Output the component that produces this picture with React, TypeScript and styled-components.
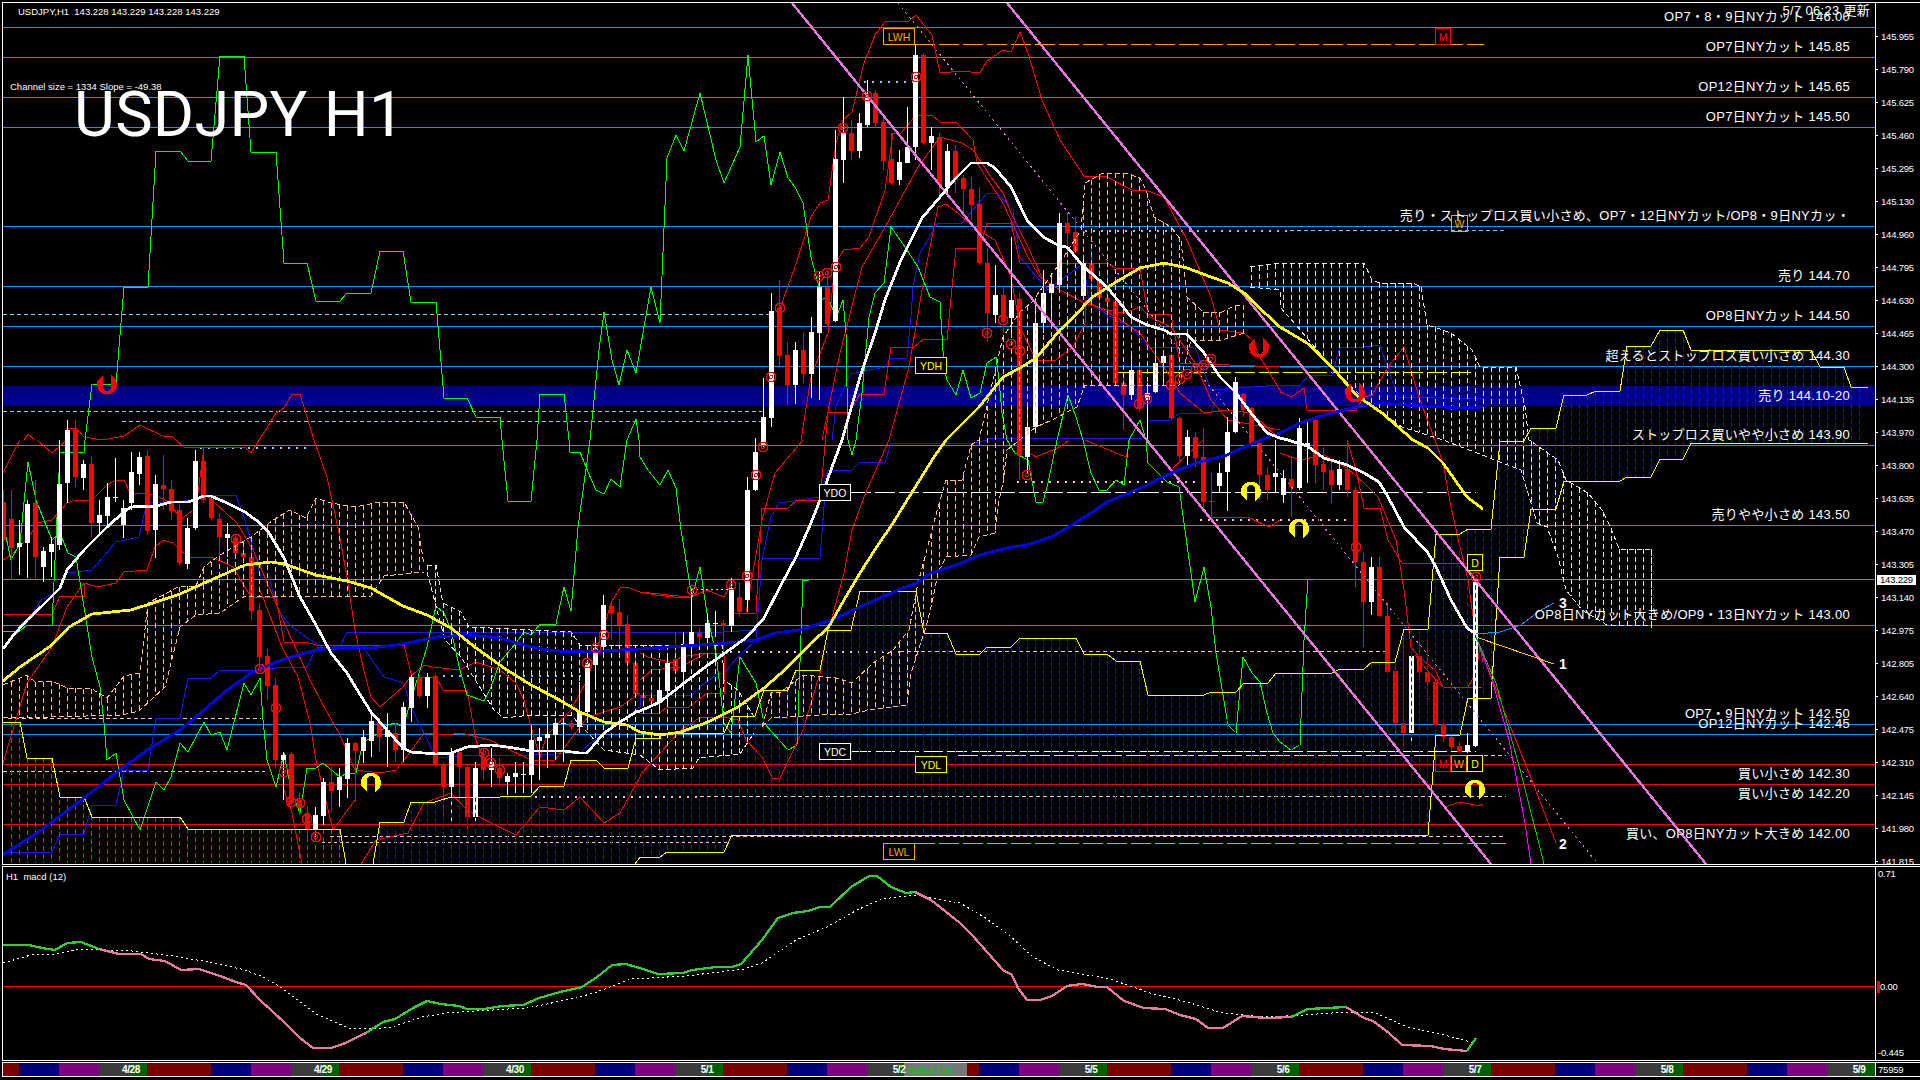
import React from 'react';
import styled, {createGlobalStyle} from 'styled-components';

const GlobalStyle = createGlobalStyle`
    html, body {
        margin: 0;
        padding: 0;
        background: #000;
    }
`;

const Screen = styled.div`
    width: 1920px;
    height: 1080px;
    box-sizing: border-box;
    padding: 2px 0 0 2px;
    background: #000;
    overflow: hidden;
    font-family: "Liberation Sans", "Noto Sans CJK JP", sans-serif;
    color: #fff;
`;
const MainRow = styled.div`
    display: flex;
    height: 863px;
    box-sizing: border-box;
    border-top: 1px solid #fff;
    border-bottom: 1px solid #fff;
    margin-bottom: 1px;
`;
const MacdRow = styled.div`
    display: flex;
    height: 195px;
    box-sizing: border-box;
    border-top: 1px solid #fff;
    border-bottom: 1px solid #fff;
    margin-bottom: 1px;
`;
const Plot = styled.div`
    flex: 0 0 1873px;
    box-sizing: border-box;
    border-left: 1px solid #fff;
    overflow: hidden;
    svg {
        display: block;
    }
`;
const PriceAxis = styled.div`
    position: relative;
    flex: 1;
    box-sizing: border-box;
    border-left: 1px solid #fff;
    padding-top: 17px;
    display: flex;
    flex-direction: column;
`;
const PriceTick = styled.div`
    height: 33px;
    line-height: 33px;
    padding-left: 5px;
    font-size: 9.5px;
    letter-spacing: -0.2px;
    position: relative;
    &::before {
        content: '';
        position: absolute;
        left: 0;
        top: 16px;
        width: 2px;
        height: 1px;
        background: #fff;
    }
`;
const CurrentPrice = styled.div`
    position: absolute;
    top: 572px;
    left: 1px;
    width: 39px;
    height: 10px;
    line-height: 10px;
    text-align: center;
    background: #fff;
    color: #000;
    font-size: 9.5px;
    letter-spacing: -0.2px;
`;
const MacdAxis = styled.div`
    flex: 1;
    box-sizing: border-box;
    border-left: 1px solid #fff;
    padding: 1px 0 0 1px;
    display: flex;
    flex-direction: column;
    align-items: flex-start;
`;
const MacdValue = styled.div<{$gap: number; $flag?: boolean}>`
    height: 12px;
    line-height: 12px;
    margin-top: ${props => props.$gap}px;
    font-size: 9.5px;
    letter-spacing: -0.2px;
    ${props => props.$flag ? 'border-left: 3px solid #f00;' : 'padding-left: 1px;'}
`;
const TimeRow = styled.div`
    position: relative;
    display: flex;
    height: 15px;
    box-sizing: border-box;
    border-top: 1px solid #fff;
    border-bottom: 1px solid #fff;
`;
const TimeStrip = styled.div`
    flex: 0 0 1873px;
    display: flex;
    box-sizing: border-box;
    border-left: 1px solid #fff;
    border-right: 1px solid #fff;
`;
const Session = styled.div<{$width: number; $tone: string}>`
    flex: 0 0 ${props => props.$width}px;
    background: ${props => props.$tone};
    display: flex;
    align-items: center;
    justify-content: flex-end;
`;
const DateLabel = styled.span`
    position: relative;
    z-index: 1;
    transform: translateX(50%);
    font-size: 10px;
    font-weight: bold;
    letter-spacing: -0.4px;
    line-height: 13px;
`;
const BarCount = styled.div`
    padding-left: 2px;
    font-size: 9.5px;
    line-height: 13px;
    letter-spacing: -0.2px;
`;
const MacdBadge = styled.div`
    position: absolute;
    left: 902px;
    top: 0;
    width: 63px;
    height: 13px;
    background: #777;
    color: #0c0;
    font-size: 11px;
    line-height: 14px;
    padding-left: 4px;
    box-sizing: border-box;
`;
const Note = styled.text`
    font-family: "Liberation Sans", "Noto Sans CJK JP", sans-serif;
    font-size: 13px;
    letter-spacing: 0.3px;
    fill: #fff;
    text-anchor: end;
    dominant-baseline: central;
`;
const Small = styled.text`
    font-family: "Liberation Sans", sans-serif;
    font-size: 9.5px;
    fill: #fff;
    dominant-baseline: central;
    white-space: pre;
`;
const Title = styled.text`
    font-family: Roboto, "Liberation Sans", sans-serif;
    font-size: 63px;
    letter-spacing: 0.3px;
    fill: #fff;
`;
const Wave = styled.text`
    font-family: "Liberation Sans", sans-serif;
    font-size: 14px;
    font-weight: bold;
    fill: #fff;
    dominant-baseline: central;
`;
const TagText = styled.text`
    font-family: "Liberation Sans", sans-serif;
    font-size: 10.5px;
    text-anchor: middle;
    dominant-baseline: central;
`;

// crops were read at 2.45x / 3x, so the traced points stay in crop units per panel
const PANELS: Record<string, [number, number, number, number]> = {
    A: [0, 0, 2.45, 3],
    B: [640, 0, 2.45, 3],
    C: [1280, 0, 2.45, 3],
    D: [0, 440, 2.45, 3],
    E: [640, 440, 2.45, 3],
    F: [1280, 440, 2.45, 3],
    G: [0, 860, 1.6333, 3],
    H: [960, 860, 1.6333, 3],
};

type Pt = [number, number];

function trace(src: string): Pt[] {
    let panel = PANELS.A;
    const out: Pt[] = [];
    src.trim().split(/\s+/).forEach(tok => {
        if (PANELS[tok]) {
            panel = PANELS[tok];
            return;
        }
        const [x, y] = tok.split(',').map(Number);
        out.push([Math.round(panel[0] + x / panel[2]), Math.round(panel[1] + y / panel[3])]);
    });
    return out;
}
const line = (src: string) => trace(src).map(p => p.join(',')).join(' ');

function yAt(poly: Pt[], x: number): number {
    if (x <= poly[0][0]) return poly[0][1];
    for (let i = 1; i < poly.length; i++) {
        const [x0, y0] = poly[i - 1];
        const [x1, y1] = poly[i];
        if (x <= x1 && x1 > x0) return y0 + (y1 - y0) * (x - x0) / (x1 - x0);
    }
    return poly[poly.length - 1][1];
}

const L1 = 'D 8,847 48,847 65,955 127,955 146,1070 205,1070 225,1132 440,1132 460,1168 832,1168 847,1272 915,1272 930,1145 990,1145 1008,1085 1065,1085 1106,1072 1225,1072 1243,1067 1302,1067 1322,1038 1381,1038 1400,960 1460,960 1480,985 1538,985 1557,895 1568,895 E 48,895 48,880 205,880 225,827 282,827 303,750 362,750 381,690 440,690 460,570 518,570 538,452 675,452 695,580 753,580 773,643 832,643 851,620 910,620 930,595 1067,595 1087,643 1145,643 1165,664 1225,664 1245,766 1381,766 1400,757 1460,757 1479,730 1538,730 1557,700 1568,700 F 127,700 146,688 205,688 225,667 282,667 303,568 362,568 381,283 440,283 460,268 518,268 538,4 598,4 C 616,1285 675,1285 695,1186 753,1186 773,1174 832,1174 851,1039 910,1039 930,991 988,991 1008,1051 1302,1051 1322,1101 1381,1101 1400,1162 1440,1162';
const L2 = 'D 1555,1272 1568,1252 E 48,1252 65,1237 205,1237 225,1184 1568,1184 F 362,1184 381,885 440,885 460,775 518,775 538,352 598,352 616,208 675,208 695,124 832,124 851,112 910,112 930,57 988,57 1008,10 1440,10';

function cloud(top: string, bottom: string, from: number, to: number): string {
    const t = trace(top);
    const b = trace(bottom);
    let d = '';
    for (let n = from; n <= to; n++) {
        const x = 3 + 8 * n;
        const y0 = Math.round(yAt(t, x));
        const y1 = Math.min(863, Math.round(yAt(b, x)));
        if (y1 > y0) d += `M${x + 0.5},${y0}V${y1}`;
    }
    return d;
}

const ORANGE = '#ffc080';
const PALE = '#ece4e4';

const SPANS: {top: string; bottom: string; from: number; to: number; color: string}[] = [
    {
        color: ORANGE, from: 1, to: 52,
        top: 'D 8,735 65,705 85,725 127,722 165,745 225,748 262,775 303,708 342,700 362,490 440,438 480,437 500,380 540,345 616,290 670,240 710,210 750,235 773,175 810,190 870,200 930,185 990,185 1024,260 1040,375',
        bottom: 'D 8,830 125,830 300,825 340,812 405,740 440,560 480,525 540,520 600,468 910,468 940,407 1040,395',
    },
    {
        color: PALE, from: 53, to: 93,
        top: 'D 1045,375 1068,375 1085,490 1130,515 1150,560 1400,575 1420,615 1568,615 E 200,615 205,720 240,750 280,830',
        bottom: 'D 1045,395 1090,600 1130,650 1210,810 1235,835 1300,825 1400,825 1480,930 1568,945 E 50,990 130,985 145,955 245,942 280,880',
    },
    {
        color: ORANGE, from: 95, to: 155,
        top: 'E 300,860 320,760 345,755 400,705 480,715 520,730 570,670 620,630 660,570 680,430 700,340 730,200 750,120 790,120 810,15 830,0 B 890,1010 930,935 960,905 1030,790 1080,690 1090,550 1130,522 1190,520 1225,535 1240,570 1260,650 1300,680 1325,720 1340,890 1380,935 1425,935 1460,915 1480,915',
        bottom: 'E 300,860 320,835 440,825 520,822 560,810 655,795 665,700 700,560 715,490 730,400 750,350 810,345 830,290 870,280 880,180 890,130 900,30 B 970,1280 1010,1260 1070,1220 1090,1155 1320,1155 1350,1020 1425,1020 1480,1000',
    },
    {
        color: PALE, from: 156, to: 206,
        top: 'B 1495,800 1568,790 C 205,790 225,840 245,848 325,848 345,860 360,975 385,985 420,1000 470,1050 490,1100 578,1100 600,1220 610,1320 F 680,60 700,120 755,160 790,210 810,265 830,328 910,328 910,570',
        bottom: 'B 1495,860 1568,870 C 0,920 40,975 90,1050 140,1120 200,1190 250,1240 300,1280 400,1320 F 590,90 630,250 655,260 680,350 700,450 740,510 800,555 910,555',
    },
];

const GREEN = [
    'D 8,573 48,573 65,555 127,555 146,36 205,36 208,0 A 225,1152 285,1152 303,860 362,860 381,452 440,452 460,482 518,482 538,167 597,167 616,455 675,455 695,790 753,790 773,902 832,902 851,880 910,880 930,752 988,752 1008,905 1067,905 1087,1195 1145,1195 1165,1252 1225,1252 1230,1320 D 1245,184 1302,184 1315,0 A 1322,1183 1381,1183 1395,1320 D 1397,35 1420,35 1440,95 1460,150 1480,162 1498,118 1518,140 1535,0 A 1557,1258 1565,1320 E 0,50 20,90 48,135 68,90 87,145 100,270 127,470 146,380 166,540 185,640 205,850 224,880 244,650 283,730 303,850 362,930 384,915 400,420 415,420',
    'D 8,250 28,360 48,310 68,65 87,180 107,240 127,300 146,280 166,340 185,350 205,500 225,650 244,740 255,850 263,960 283,940 303,1080 342,1170 381,1025 401,1050 420,1010 440,910 460,935 479,890 499,845 518,885 538,875 557,930 597,730 616,765 636,715 644,840 655,960 675,1040 695,940 714,1050 734,1120 753,985 773,985 792,968 832,1010 851,1000 871,1000 890,905 910,895 930,875 949,855 969,848 988,860 1008,780 1028,690 1047,620 1068,497 1087,520 1106,570 1126,690 1145,765 1185,782 1204,740 1224,665 1263,610 1283,575 1302,585 1322,552 1361,552 1381,442 1400,512 1415,260 1445,0 A 1468,1050 1480,935 1500,1080 1517,1155 1537,1050 1557,1120 1568,1050 B 28,862 48,970 65,475 87,405 107,452 146,280 185,480 205,548 244,440 264,165 283,427 303,408 322,555 342,455 362,535 380,560 400,610 420,770 438,860 440,900 460,890 479,955 498,900 505,1000 510,1320 E 520,45 530,0 B 544,1180 560,950 575,880 597,850 616,680 650,740 680,800 710,890 735,905 745,1100 753,1140 773,1185 792,1110 812,1195 832,1180 851,1090 871,1070 880,1140 888,1240 900,1320 E 918,40 950,60 970,185 988,185 1000,130 1022,0 B 1048,1185 1068,1250 1085,1320 E 1105,100 1125,150 1145,150 1165,120 1185,135 1197,0 B 1224,1260 1240,1320 E 1245,70 1290,125 1320,140 1335,270 1360,485 1381,380 1400,500 1412,640 1440,855 1460,880 1478,650 1500,700 1518,725 1535,820 1550,880 1568,905 F 28,930 48,915 58,600 68,418 80,418',
];

const RED = [
    'D 8,970 65,730 127,620 165,500 205,430 240,440 283,430 305,395 360,390 380,320 400,300 425,310 460,350 520,350 570,380 616,470 675,470 695,605 750,605 775,615 990,615 1010,710 1068,710 1085,750 1145,750 1165,900 1185,960',
    'D 8,523 127,523 146,468 205,468 205,430',
    'D 500,160 580,250 620,330 660,440 700,560 730,640 760,720 790,790 830,880 870,990 930,1000 970,990 1000,945 1040,880 1090,885 1130,880 1200,900 1240,925 1302,960 1360,960 1420,860 1440,830 1520,800 1568,760',
    'D 430,0 450,20 600,20 615,40 635,0 A 655,1285 675,1240 695,1225 715,1183 735,1183 770,1320 D 800,110 830,280 850,410 870,570 890,680 910,770 930,800 988,740 1008,708 1040,675 1060,680 1125,690 1165,665 1224,690 1263,730 1283,780 1302,860 1322,950 1341,885 1400,810 1439,720 1479,560 1498,490 1518,445 1537,440 1568,455 E 40,465 105,475 125,470 165,450 205,470 225,430',
    'A 160,1320 165,1283 185,1285 205,1310 235,1317 265,1317 305,1307 342,1276 400,1307 425,1310 430,1320',
    'D 8,360 27,345 70,290 90,250 127,240 165,190 185,180 225,180 262,135 283,120 303,120 322,165 342,160 380,165 420,190 440,240 480,205 500,20',
    'A 60,1320 68,1303 85,1320',
    'D 8,100 40,20 50,0',
    'D 90,0 127,40 165,0',
    'D 636,450 690,620 730,710 760,850 775,960 815,1170 870,1080',
    'D 695,1050 715,1120 740,1272',
    'D 885,1272 920,1200 1000,1180 1040,1090 1106,1060 1145,1110 1204,1150 1263,1185 1322,1100 1381,1110 1420,1070 1479,1150 1518,1120 1568,1010 E 0,1005 100,870 150,830 205,830 240,840 260,900 300,950 325,1018 342,1015 400,870 440,700 455,600 500,400 520,270 550,170 610,0 B 660,1100 700,800 730,620 750,612 780,640 815,680 870,720 910,830 930,980 970,1080 1020,1080 1060,1040 1090,970 1090,900',
    'E 225,520 283,520 300,205 362,205 385,180 440,180 B 460,1237 512,1237 538,1183 598,1183 616,1042 672,1042 695,1018 753,1018 773,745 832,745 851,670 910,670 930,790 1145,790 1165,805 1224,805 1245,942 1302,942 1322,1090 1568,1100 C 100,1100',
    'E 0,640 20,650 80,670 100,650 165,640 205,640 205,760 165,760 120,800 65,800 48,820 0,820',
    'E 0,720 30,690 100,680 130,660 165,640',
    'E 260,520 300,240 330,100 400,0',
    'E 0,455 120,470',
    'B 342,925 380,800 420,650 440,610 460,600 480,430 498,360 520,335 550,190 575,105 600,65 660,62 675,45 715,105 735,218 790,213 832,218 851,182 890,150 910,155 930,97 950,160 985,300 1030,420 1087,527 1145,530 1205,570 1245,572 1283,590 1340,720 1400,890 1420,990 1480,1000 1500,1020 1520,1070 1568,1170 C 0,1175 30,1190 60,1165 65,1230 185,1230 205,1190 225,1185 265,1100 303,1040 340,1190 380,1320 F 400,70 420,200 440,320 460,420 480,590',
    'B 395,1320 420,1130 460,1000 478,790 500,750 540,745 560,710 600,570 620,400 640,400 675,345 715,345 735,365 775,367 815,420 825,490 890,610 950,770 980,830 1030,870 1090,910 1145,930 1185,940 1225,920 1250,950 1300,980 1360,1090 1400,1200 1440,1260 1568,1290',
    'B 445,1320 490,1060 545,800 610,660 680,500 735,410 790,430 815,450 860,530 890,580 910,640 950,740 985,830',
    'B 1090,900 1165,950 1225,1000 1283,1100 1322,1180 1381,1240 1440,1230 1500,1240 1568,1320',
    'F 0,40 48,60 107,45 165,85 205,130 240,170 283,300 303,450 322,620 340,650 380,690 400,740 460,740 480,700 490,620 497,665',
    'F 165,0 185,90 205,205 245,205 265,300 300,370 460,370',
    'F 330,645 361,690 400,742 495,740',
    'F 405,1100 440,1085 490,1098 497,1092',
    'E 930,20 970,50 1030,20 1050,0',
    'E 1090,0 1190,50 1200,0',
    'E 1240,0 1300,90 1380,0',
    'E 1400,235 1490,230 1540,260 1568,240',
];

const THIN_BLUE = [
    'D 8,1237 127,1237 146,1183 205,1183 225,1095 283,1095 303,990 362,990 381,835 440,835 460,715 518,715 538,690 636,690 700,680 753,680 773,625 832,620 851,575 1568,575 E 205,575 285,570 285,610',
    'D 60,560 100,480 146,450 165,400 225,390 283,305 340,290 361,185 420,185 480,180 518,165 577,165 600,240 640,410 660,410 680,510 710,555 750,590 800,630 890,620 940,710 990,730 1008,800 1040,880 1068,955 1145,945 1300,945 1420,940 1440,915 1568,800 E 0,765 127,765 146,740 185,705 205,700 240,650 283,600 300,360 320,230 340,190 440,170 460,90 520,90 540,65 600,65 615,10 820,10 850,0',
    'E 300,355 440,355 450,200 460,90',
    'B 470,1320 480,1217 515,1122 600,1100 615,1075 655,1075 665,950 670,860 685,760 730,670 790,668 850,580 875,580 915,630 930,770 1000,870 1087,790 1100,910 1165,960 1205,980 1245,1040 1360,1040 1400,1170 1568,1155 C 48,1155 70,1125 127,1125 146,1042 205,1042 245,1035 290,1190 500,1197',
    'B 1245,1260 1302,1260 1322,1238 1400,1238 1420,1170',
    'B 850,1315 1230,1315',
];

const SKY = '#87cefa';
const PINK = '#ffc0cb';
const PALE_DOTS: {y: number; x0: number; x1: number; color: string; dash: string; thick?: boolean}[] = [
    {y: 314, x0: 3, x1: 769, color: SKY, dash: '4 3'},
    {y: 411, x0: 3, x1: 762, color: SKY, dash: '4 3'},
    {y: 421, x0: 122, x1: 762, color: SKY, dash: '4 3'},
    {y: 447, x0: 200, x1: 306, color: SKY, dash: '2 6', thick: true},
    {y: 81, x0: 864, x1: 914, color: SKY, dash: '2 6', thick: true},
    {y: 230, x0: 1085, x1: 1290, color: SKY, dash: '2 6', thick: true},
    {y: 230, x0: 1290, x1: 1506, color: SKY, dash: '4 3'},
    {y: 675, x0: 443, x1: 584, color: SKY, dash: '2 6', thick: true},
    {y: 718, x0: 8, x1: 261, color: PINK, dash: '4 3'},
    {y: 771, x0: 3, x1: 265, color: PINK, dash: '4 3'},
    {y: 796, x0: 535, x1: 700, color: PINK, dash: '2 6', thick: true},
    {y: 796, x0: 700, x1: 1506, color: PINK, dash: '4 3'},
    {y: 836, x0: 330, x1: 1506, color: PINK, dash: '4 3'},
    {y: 842, x0: 322, x1: 730, color: PINK, dash: '3 3'},
    {y: 651, x0: 722, x1: 900, color: PINK, dash: '2 6', thick: true},
    {y: 651, x0: 900, x1: 1386, color: PINK, dash: '4 3'},
    {y: 481, x0: 1017, x1: 1201, color: PINK, dash: '2 6', thick: true},
    {y: 519, x0: 1200, x1: 1347, color: PINK, dash: '2 6', thick: true},
    {y: 589, x0: 691, x1: 732, color: '#e0e0e0', dash: '2 3'},
    {y: 645, x0: 580, x1: 680, color: PINK, dash: '2 3'},
    {y: 755, x0: 1484, x1: 1506, color: PINK, dash: '4 3'},
];

const LEVEL_DASHES: {y: number; x0: number; x1: number; color: string}[] = [
    {y: 44, x0: 915, x1: 1484, color: '#ffa500'},
    {y: 372, x0: 1115, x1: 1476, color: '#ffff00'},
    {y: 492, x0: 851, x1: 1476, color: '#ffffff'},
    {y: 751, x0: 851, x1: 1476, color: '#ffffff'},
    {y: 755, x0: 958, x1: 1476, color: '#ffff00'},
    {y: 843, x0: 915, x1: 1506, color: '#ffa500'},
];

const BLUE_LEVELS = [27, 57, 97, 127, 226, 286, 326, 366, 445, 525, 625, 724, 734];
const RED_LEVELS = [764, 784, 824];

const NOTES: [string, number][] = [
    ['OP7・8・9日NYカット 146.00', 16],
    ['OP7日NYカット 145.85', 46],
    ['OP12日NYカット 145.65', 86],
    ['OP7日NYカット 145.50', 116],
    ['売り・ストップロス買い小さめ、OP7・12日NYカット/OP8・9日NYカッ・', 215],
    ['売り 144.70', 275],
    ['OP8日NYカット 144.50', 315],
    ['超えるとストップロス買い小さめ 144.30', 355],
    ['売り 144.10-20', 395],
    ['ストップロス買いやや小さめ 143.90', 434],
    ['売りやや小さめ 143.50', 514],
    ['OP8日NYカット大きめ/OP9・13日NYカット 143.00', 614],
    ['OP7・9日NYカット 142.50', 713],
    ['OP12日NYカット 142.45', 723],
    ['買い小さめ 142.30', 773],
    ['買い小さめ 142.20', 793],
    ['買い、OP8日NYカット大きめ 142.00', 833],
];

const TAGS: {label: string; x: number; y: number; w: number; color: string; clear?: boolean}[] = [
    {label: 'LWH', x: 883, y: 28, w: 32, color: '#ffa500'},
    {label: 'M', x: 1435, y: 28, w: 16, color: '#ff0000', clear: true},
    {label: 'W', x: 1451, y: 215, w: 17, color: '#ffa500', clear: true},
    {label: 'YDH', x: 915, y: 357, w: 32, color: '#ffff00'},
    {label: 'YDO', x: 819, y: 484, w: 32, color: '#ffffff'},
    {label: 'YDC', x: 819, y: 743, w: 32, color: '#ffffff'},
    {label: 'YDL', x: 915, y: 756, w: 32, color: '#ffff00'},
    {label: 'LWL', x: 883, y: 843, w: 32, color: '#ffa500'},
    {label: 'D', x: 1467, y: 554, w: 16, color: '#ffff00'},
    {label: 'M', x: 1435, y: 755, w: 16, color: '#ff0000', clear: true},
    {label: 'W', x: 1451, y: 755, w: 16, color: '#ffa500', clear: true},
    {label: 'D', x: 1467, y: 755, w: 16, color: '#ffff00'},
];

const RINGS = trace(`B 675,232 557,287 498,385 439,829 459,820 479,802 342,924 322,1130 851,1000 890,960 910,1033 930,1053 1223,1213 1243,1198 1302,1155 1322,1137 1341,1122 1361,1107 1381,1094 1400,1078
    D 577,296 636,686 675,805 695,997 714,1085 734,1090 753,1137 773,1190 1185,940 1204,970 1224,990 1439,670 1459,625 1479,585
    E 302,20 283,105 263,408 224,436 127,449 949,105
    F 185,322 479,410`);

type Candle = [number, number, number, number, 'w' | 'r'];

const CANDLES_D: Candle[] = [
    [150,185,300,330,'r'],[150,237,325,420,'r'],[240,310,322,405,'w'],[180,193,310,415,'w'],[120,190,350,415,'r'],
    [320,333,380,425,'w'],[290,312,335,410,'w'],[0,133,315,330,'w'],[-60,-30,130,190,'w'],[-60,-30,112,140,'r'],
    [60,72,115,150,'w'],[50,72,250,290,'r'],[180,225,250,280,'w'],[130,170,228,260,'w'],[55,172,175,185,'w'],
    [180,205,255,295,'w'],[35,97,190,210,'w'],[35,52,102,135,'w'],[30,48,272,285,'r'],[105,132,270,355,'w'],
    [45,135,148,210,'r'],[120,148,212,240,'r'],[180,210,370,375,'r'],[235,265,372,388,'w'],[30,63,263,270,'w'],
    [20,63,180,190,'r'],[165,178,233,243,'r'],[220,237,292,355,'r'],[250,283,293,350,'w'],[285,295,340,345,'r'],
    [315,340,352,360,'r'],[290,352,513,540,'r'],[490,510,650,690,'r'],[628,648,738,780,'r'],[715,735,960,985,'r'],
    [935,945,960,1080,'w'],[935,942,1090,1095,'r'],[1060,1080,1100,1125,'r'],[1098,1120,1170,1190,'r'],[1100,1125,1170,1200,'w'],
    [1015,1025,1127,1155,'w'],[980,1025,1052,1115,'r'],[985,1010,1050,1100,'w'],[895,908,1017,1075,'w'],[905,908,933,1085,'r'],
    [870,890,932,970,'w'],[810,843,903,950,'w'],[835,843,890,935,'r'],[820,870,890,980,'w'],[850,878,930,965,'r'],
    [785,800,930,965,'w'],[705,712,803,845,'w'],[705,712,768,775,'r'],[700,712,768,805,'w'],[700,707,975,980,'r'],
    [970,975,1040,1130,'r'],[925,935,1040,1150,'w'],[925,935,980,1090,'r'],[975,980,1130,1180,'r'],[965,985,1130,1150,'w'],
    [925,950,990,1020,'r'],[925,965,990,1040,'w'],[955,985,1015,1040,'r'],[1000,1008,1025,1065,'w'],[965,1000,1010,1060,'w'],
    [965,1001,1003,1060,'w'],[855,900,1005,1060,'w'],[865,892,903,1020,'w'],[830,883,893,985,'w'],[835,850,885,960,'w'],
    [835,848,850,965,'w'],[840,848,862,870,'r'],[725,815,862,880,'w'],[660,670,815,850,'w'],[590,625,675,735,'w'],
    [465,495,620,640,'w'],[490,497,518,600,'r'],[478,516,556,640,'r'],[525,553,670,690,'r'],[640,668,762,770,'r'],
    [740,765,775,800,'r'],[750,775,782,800,'r'],[720,750,785,815,'w'],[655,670,752,800,'w'],[575,658,693,700,'r'],
    [575,612,695,715,'w'],[450,575,617,640,'w'],[565,580,590,630,'r'],[520,550,595,625,'w'],[512,549,553,590,'w'],
    [540,549,557,635,'r'],[415,445,558,575,'w'],[430,470,515,530,'r'],[110,150,480,515,'w'],[-5,37,150,152,'w'],
];

const CANDLES_B: Candle[] = [
    [1135,1250,1335,1340,'w'],[880,933,1255,1280,'w'],[840,925,1068,1100,'r'],[1025,1065,1155,1215,'r'],[1025,1050,1155,1212,'w'],
    [1000,1050,1122,1150,'r'],[950,995,1122,1195,'w'],[815,860,998,1200,'w'],[810,860,972,980,'r'],[390,478,963,965,'w'],
    [290,400,480,550,'w'],[360,400,453,480,'r'],[340,370,453,475,'w'],[240,290,375,380,'w'],[270,280,370,385,'r'],
    [350,365,483,510,'r'],[400,478,550,555,'r'],[450,487,540,555,'w'],[320,440,488,490,'w'],[135,165,440,480,'w'],
    [160,165,430,435,'r'],[380,408,430,510,'w'],[400,410,555,600,'r'],[432,452,560,590,'w'],[435,452,540,580,'r'],
    [525,533,567,640,'r'],[530,567,615,660,'r'],[560,612,790,795,'r'],[745,790,940,1025,'r'],[795,885,945,970,'w'],
    [860,885,965,1000,'r'],[710,900,953,1000,'w'],[880,897,1368,1440,'r'],[1215,1280,1371,1420,'w'],[900,970,1280,1300,'w'],
    [810,880,970,1000,'w'],[820,852,880,950,'w'],[640,670,855,880,'w'],[640,670,698,760,'r'],[650,695,752,760,'r'],
    [780,790,888,900,'w'],[750,790,838,880,'r'],[835,838,895,980,'r'],[815,895,905,990,'r'],[900,905,1148,1150,'r'],
    [1130,1148,1185,1290,'r'],[1065,1110,1185,1200,'w'],[1100,1110,1225,1235,'r'],[1150,1178,1200,1320,'w'],[1025,1090,1175,1180,'w'],
    [1050,1068,1090,1150,'w'],[1060,1065,1255,1260,'r'],[1250,1255,1368,1390,'r'],[1290,1310,1368,1400,'w'],[1295,1310,1375,1400,'r'],
    [1285,1370,1505,1520,'r'],[1420,1503,1507,1555,'r'],[1390,1418,1458,1480,'w'],[1250,1295,1417,1532,'w'],[1130,1145,1295,1300,'w'],
    [1180,1183,1230,1250,'r'],[1220,1225,1330,1340,'r'],[1320,1330,1425,1500,'r'],[1400,1425,1470,1500,'r'],
];

const CANDLES_F: Candle[] = [
    [0,100,110,160,'w'],[90,115,165,190,'w'],[50,117,140,230,'r'],[-65,-35,145,150,'w'],[-60,10,20,130,'w'],
    [-60,-60,75,130,'r'],[20,72,95,150,'r'],[60,90,135,190,'r'],[60,88,135,150,'w'],[10,88,150,170,'r'],
    [140,150,365,440,'r'],[340,365,485,620,'r'],[350,380,485,525,'w'],[350,380,528,530,'r'],[485,527,695,700,'r'],
    [680,693,850,890,'r'],[570,850,880,930,'r'],[640,648,880,915,'w'],[590,648,697,730,'r'],[600,697,725,780,'r'],
    [715,725,855,860,'r'],[850,853,892,905,'r'],[880,892,920,930,'r'],[905,918,935,940,'r'],[880,915,935,940,'w'],
    [410,420,918,920,'w'],
];

const CANDLES = [
    ...CANDLES_D.map((c): [Candle, number] => [c, 440]),
    ...CANDLES_B.map((c): [Candle, number] => [c, 0]),
    ...CANDLES_F.map((c): [Candle, number] => [c, 440]),
];

const WHITE_MA = 'D 8,628 30,590 65,540 100,500 146,445 165,390 205,330 263,260 303,215 322,200 381,197 420,187 460,187 499,168 518,167 557,190 600,215 636,250 660,280 695,355 735,470 773,555 812,640 851,700 871,745 910,815 949,870 988,925 1008,935 1067,942 1106,940 1145,922 1204,915 1243,920 1302,933 1381,933 1420,940 1439,940 1479,880 1518,845 1557,815 1568,812 E 48,785 107,730 166,675 225,625 263,590 303,535 342,440 381,350 420,250 440,180 B 495,1320 540,1130 578,990 600,900 640,780 690,655 735,590 770,540 812,490 851,488 870,505 910,560 949,660 988,710 1028,737 1047,740 1087,800 1106,820 1145,860 1185,925 1204,950 1243,975 1283,990 1302,1002 1341,1002 1381,1060 1420,1130 1459,1180 1498,1240 1537,1300 1568,1315 F 20,0 65,18 107,55 165,75 205,100 243,125 263,165 303,260 362,340 381,380 420,480 459,565 479,583';
const YELLOW_MA = 'D 8,722 50,680 127,615 170,560 225,522 322,510 381,487 440,462 518,420 600,375 665,367 695,372 773,405 851,422 910,445 988,497 1047,525 1106,565 1165,625 1243,690 1302,735 1361,775 1420,815 1479,845 1537,855 1568,875 E 48,885 100,875 166,845 240,800 303,745 362,680 420,610 460,565 500,480 538,400 578,325 620,250 660,170 720,50 750,0 B 830,1220 890,1130 930,1105 970,1075 1028,990 1067,945 1106,895 1165,845 1224,805 1283,790 1341,805 1400,830 1440,850 1480,880 1537,945 1568,980 C 65,1030 127,1100 185,1185 250,1240 325,1320 F 362,25 400,70 459,170 498,208';
const BLUE_MA = 'D 8,1245 100,1170 205,1075 283,1000 361,930 440,870 499,810 557,750 616,700 675,665 714,650 773,630 832,622 910,625 988,612 1067,590 1145,585 1224,595 1302,620 1361,633 1439,637 1518,630 1568,627 E 100,618 185,612 283,600 330,580 390,570 470,540 538,500 616,460 675,430 714,400 773,375 832,345 910,322 949,315 1008,290 1047,265 1106,220 1145,185 1204,155 1243,135 1302,100 1361,70 1439,45 1518,0 1568,-20 C 48,1270 107,1245 185,1220 243,1208 303,1215 400,1222 440,1225 498,1222';

const MACD_UP = [
    'G 5,254 48,254 68,265 90,270 110,248 133,245 162,268',
    'G 598,518 625,487 645,478 675,443 697,422 720,433 750,437 762,446 790,446 820,439 855,434 880,415 915,397 950,380 975,350 1000,315 1022,311 1050,328 1075,342 1115,339 1130,331 1170,322 1195,320 1210,312 1245,240 1270,175 1295,158 1320,153 1340,140 1355,140 1390,80 1420,47 1432,47 1455,80 1480,98 1495,96',
    'H 540,472 568,446 630,440',
    'H 828,573 842,535',
];
const MACD_DOWN = [
    'G 162,268 195,282 230,282 243,296 270,302 295,330 325,328 360,348 385,366 402,375 425,420 465,490 490,535 512,563 540,564 560,552 598,518',
    'G 1495,96 1520,120 1568,190 H 20,225 45,280 70,330 85,345 95,385 110,420 130,420 150,408 175,378 200,371 225,380 240,382 268,422 300,445 335,446 360,466 385,478 405,503 430,503 460,468 500,473 540,472',
    'H 630,440 660,475 675,483 700,520 722,556 770,558 790,568 828,573',
];
const MACD_SIGNAL = 'G 5,310 50,285 90,282 130,268 215,272 285,287 350,310 400,330 430,350 460,385 520,465 570,503 610,507 640,500 690,470 730,458 830,448 860,443 940,415 975,395 1030,358 1120,347 1215,328 1245,310 1300,240 1350,200 1400,150 1440,118 1495,106 1568,130 H 40,170 80,225 120,290 160,330 245,358 310,400 370,425 430,460 500,470 560,465 630,455 680,460 730,500 790,525 835,545';

const PRICES = ['145.955','145.790','145.625','145.460','145.295','145.130','144.960','144.795','144.630','144.465','144.300','144.135','143.970','143.800','143.635','143.470','143.305','143.140','142.975','142.805','142.640','142.475','142.310','142.145','141.980','141.815'];
const DAYS = ['4/29','4/30','5/1','5/2','5/5','5/6','5/7','5/8','5/9'];

function Horseshoe({x, y, color, down}: {x: number; y: number; color: string; down?: boolean}) {
    return (
        <path
            transform={`translate(${x},${y}) scale(1,${down ? -1 : 1})`}
            fill={color}
            stroke="none"
            d="M-9,5 A10,10 0 1 1 9,5 L4,10 L4,-2 Q4,-6 0,-6 Q-4,-6 -4,-2 L-4,10 Z"
        />
    );
}

function Day({label}: {label: string}) {
    return (
        <>
            <Session $width={64} $tone="#7a0000" />
            <Session $width={40} $tone="#00007f" />
            <Session $width={40} $tone="#7f007f" />
            <Session $width={32} $tone="#3c3c3c"><DateLabel>{label}</DateLabel></Session>
            <Session $width={16} $tone="#005f00" />
        </>
    );
}

function PriceChart() {
    return (
        <svg width={1872} height={861} viewBox="3 3 1872 861" shapeRendering="crispEdges" fill="none">
            <rect x={3} y={386} width={1872} height={20} fill="#00008b" />
            {BLUE_LEVELS.map(y => <path key={y} d={`M3,${y + 0.5}H1875`} stroke="#1e90ff" />)}
            {RED_LEVELS.map(y => <path key={y} d={`M3,${y + 0.5}H1875`} stroke="#ff0000" />)}
            <path d="M3,579.5H1875" stroke="#808080" />
            {PALE_DOTS.map((d, i) => (
                <path key={i} d={`M${d.x0},${d.y + 0.5}H${d.x1}`} stroke={d.color} strokeDasharray={d.dash} strokeWidth={d.thick ? 2 : 1} />
            ))}
            {LEVEL_DASHES.map((d, i) => (
                <path key={i} d={`M${d.x0},${d.y + 0.5}H${d.x1}`} stroke={d.color} strokeDasharray="20 4" />
            ))}
            {THIN_BLUE.map((s, i) => <polyline key={i} points={line(s)} stroke="#1414ff" />)}
            {RED.map((s, i) => <polyline key={i} points={line(s)} stroke="#ff0000" />)}
            {GREEN.map((s, i) => <polyline key={i} points={line(s)} stroke="#00ff00" />)}
            {CANDLES.map(([[hi, top, bot, lo, kind], base], n) => {
                const x = 3 + 8 * n;
                const color = kind === 'w' ? '#ffffff' : '#ff0000';
                const y = (v: number) => Math.round(base + v / 3);
                return (
                    <g key={n}>
                        <rect x={x} y={y(hi)} width={1} height={y(lo) - y(hi)} fill={color} />
                        <rect x={x - 2} y={y(top)} width={5} height={Math.max(1, y(bot) - y(top))} fill={color} />
                    </g>
                );
            })}
            <path d={cloud(L1, 'D 0,1272 840,1272', 1, 42)} stroke="#ff2020" strokeDasharray="5 3" />
            <path d={cloud(L1, L2, 46, 232)} stroke="#0f0fff" strokeDasharray="5 3" />
            {SPANS.map((s, i) => (
                <g key={i} stroke={s.color} strokeDasharray="5 3">
                    <path d={cloud(s.top, s.bottom, s.from, s.to)} />
                    <polyline points={line(s.top)} />
                    <polyline points={line(s.bottom)} />
                </g>
            ))}
            <polyline points={line(L1)} stroke="#ffff00" />
            <polyline points={line(L2)} stroke="#ffff00" />
            <path d="M792,3L1491,864" stroke="#e878e0" strokeWidth={2.4} />
            <path d="M1007,3L1706,864" stroke="#e878e0" strokeWidth={2.4} />
            <path d="M898,3L1598,864" stroke="#e878e0" strokeDasharray="2 4" />
            <polyline points={line(BLUE_MA)} stroke="#0000ff" strokeWidth={2.8} />
            <polyline points={line(YELLOW_MA)} stroke="#ffff00" strokeWidth={2.8} />
            <polyline points={line(WHITE_MA)} stroke="#ffffff" strokeWidth={2.8} />
            {RINGS.map(([x, y], i) => (
                <g key={i} stroke="#ff0000">
                    <circle cx={x} cy={y} r={4.5} strokeWidth={1.5} />
                    <circle cx={x} cy={y} r={1.5} strokeWidth={1} />
                </g>
            ))}
            <polyline points={line('F 480,590 672,672')} stroke="#ffc000" />
            <polyline points={line('F 480,583 540,575 590,555 640,510 672,490')} stroke="#1e90ff" />
            <polyline points={line('F 480,590 560,850 620,1030 675,1210')} stroke="#ff0000" />
            <polyline points={line('F 480,590 520,720 560,900 600,1150 615,1272')} stroke="#ff00ff" />
            <polyline points={line('F 480,590 530,730 590,1000 648,1272')} stroke="#00c000" />
            <Horseshoe x={107} y={385} color="#ff0000" down />
            <Horseshoe x={1259} y={348} color="#ff0000" down />
            <Horseshoe x={1355} y={393} color="#ff0000" down />
            <Horseshoe x={371} y={782} color="#ffff00" />
            <Horseshoe x={1251} y={491} color="#ffff00" />
            <Horseshoe x={1299} y={528} color="#ffff00" />
            <Horseshoe x={1475} y={789} color="#ffff00" />
            {TAGS.map((t, i) => (
                <g key={i}>
                    <rect x={t.x + 0.5} y={t.y + 0.5} width={t.w - 1} height={16} fill="#000" fillOpacity={t.clear ? 0 : 1} stroke={t.color} />
                    <TagText x={t.x + t.w / 2} y={t.y + 9} style={{fill: t.color}}>{t.label}</TagText>
                </g>
            ))}
            <Small x={18} y={11}>{'USDJPY,H1  143.228 143.229 143.228 143.229'}</Small>
            <Small x={10} y={86}>Channel size = 1334 Slope = -49.38</Small>
            <Title x={74} y={136}>USDJPY H1</Title>
            <Wave x={1559} y={603}>3</Wave>
            <Wave x={1559} y={664}>1</Wave>
            <Wave x={1559} y={844}>2</Wave>
            {NOTES.map(([text, y], i) => <Note key={i} x={1850} y={y}>{text}</Note>)}
            <Note x={1870} y={10}>5/7 06:23 更新</Note>
        </svg>
    );
}

function MacdChart() {
    return (
        <svg width={1872} height={193} viewBox="3 867 1872 193" shapeRendering="crispEdges" fill="none">
            <path d="M3,986.5H1875" stroke="#ff0000" />
            <polyline points={line(MACD_SIGNAL)} stroke="#ffffff" strokeDasharray="2 3" />
            {MACD_UP.map((s, i) => <polyline key={i} points={line(s)} stroke="#32cd32" strokeWidth={2.3} />)}
            {MACD_DOWN.map((s, i) => <polyline key={i} points={line(s)} stroke="#e87ca0" strokeWidth={2.3} />)}
            <Small x={6} y={876}>{'H1  macd (12)'}</Small>
        </svg>
    );
}

function App() {
    return (
        <Screen>
            <GlobalStyle />
            <MainRow>
                <Plot><PriceChart /></Plot>
                <PriceAxis>
                    {PRICES.map(p => <PriceTick key={p}>{p}</PriceTick>)}
                    <CurrentPrice>143.229</CurrentPrice>
                </PriceAxis>
            </MainRow>
            <MacdRow>
                <Plot><MacdChart /></Plot>
                <MacdAxis>
                    <MacdValue $gap={0}>0.71</MacdValue>
                    <MacdValue $gap={101} $flag>0.00</MacdValue>
                    <MacdValue $gap={54}>-0.445</MacdValue>
                </MacdAxis>
            </MacdRow>
            <TimeRow>
                <TimeStrip>
                    <Session $width={16} $tone="#7a0000" />
                    <Session $width={40} $tone="#00007f" />
                    <Session $width={40} $tone="#7f007f" />
                    <Session $width={32} $tone="#3c3c3c"><DateLabel>4/28</DateLabel></Session>
                    <Session $width={16} $tone="#005f00" />
                    {DAYS.map(d => <Day key={d} label={d} />)}
                </TimeStrip>
                <BarCount>75959</BarCount>
                <MacdBadge>macd OK</MacdBadge>
            </TimeRow>
        </Screen>
    );
}

export default App;
